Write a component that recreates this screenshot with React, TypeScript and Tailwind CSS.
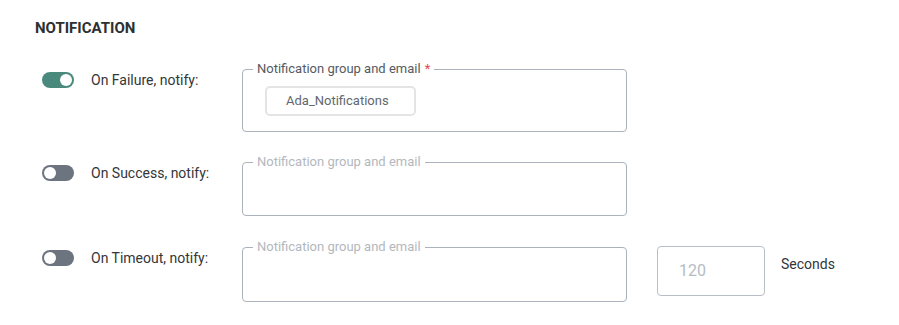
import React from "react";

function Toggle({ on }: { on: boolean }) {
  return (
    <div
      className={
        "relative h-[16px] w-[32px] rounded-full flex items-center px-[2px] " +
        (on ? "bg-[#4a8a7d] justify-end" : "bg-[#6c7480] justify-start")
      }
    >
      <div className="h-[12px] w-[12px] rounded-full bg-white" />
    </div>
  );
}

function Box({
  h,
  active,
  required,
  children,
}: {
  h: string;
  active?: boolean;
  required?: boolean;
  children?: React.ReactNode;
}) {
  return (
    <div className={"relative w-[385px] rounded-[4px] border border-[#aab2bc] " + h}>
      <span
        className={
          "absolute left-[10px] top-[-9px] bg-white px-[4px] text-[13px] leading-[16px] " +
          (active ? "text-[#555a60]" : "text-[#b3b8be]")
        }
      >
        Notification group and email
        {required && <span className="ml-[1px] text-[#e5484d]"> *</span>}
      </span>
      {children}
    </div>
  );
}

function Row({
  on,
  label,
  children,
  className,
}: {
  on: boolean;
  label: string;
  children: React.ReactNode;
  className?: string;
}) {
  return (
    <div className={"flex items-start " + (className ?? "")}>
      <div className="flex h-[22px] w-[200px] items-center">
        <Toggle on={on} />
        <span className="ml-[17px] text-[14px] text-[#333639]">{label}</span>
      </div>
      {children}
    </div>
  );
}

export default function App() {
  return (
    <div
      className="h-[325px] w-[899px] bg-white"
      style={{ fontFamily: "Roboto, 'Liberation Sans', sans-serif" }}
    >
      <div className="pl-[35px] pt-[18px] text-[15px] font-bold leading-[20px] text-[#2d2f31]">
        NOTIFICATION
      </div>
      <div className="pl-[42px] pt-[31px]">
        <Row on label="On Failure, notify:">
          <Box h="h-[63px]" active required>
            <div className="ml-[22px] mt-[16px] flex h-[30px] w-[151px] items-center rounded-[5px] border-2 border-[#e2e4e6] pl-[19px] text-[13px] text-[#62676d]">
              Ada_Notifications
            </div>
          </Box>
        </Row>
        <Row on={false} label="On Success, notify:" className="mt-[30px]">
          <Box h="h-[54px]" />
        </Row>
        <Row on={false} label="On Timeout, notify:" className="mt-[31px]">
          <Box h="h-[55px]" />
          <div className="ml-[30px] mt-[-1px] flex h-[50px] w-[108px] items-center rounded-[4px] border border-[#b8bec6] pl-[21px] text-[16px] text-[#b5bcc4]">
            120
          </div>
          <div className="ml-[16px] mt-[7px] text-[14px] text-[#333639]">Seconds</div>
        </Row>
      </div>
    </div>
  );
}
